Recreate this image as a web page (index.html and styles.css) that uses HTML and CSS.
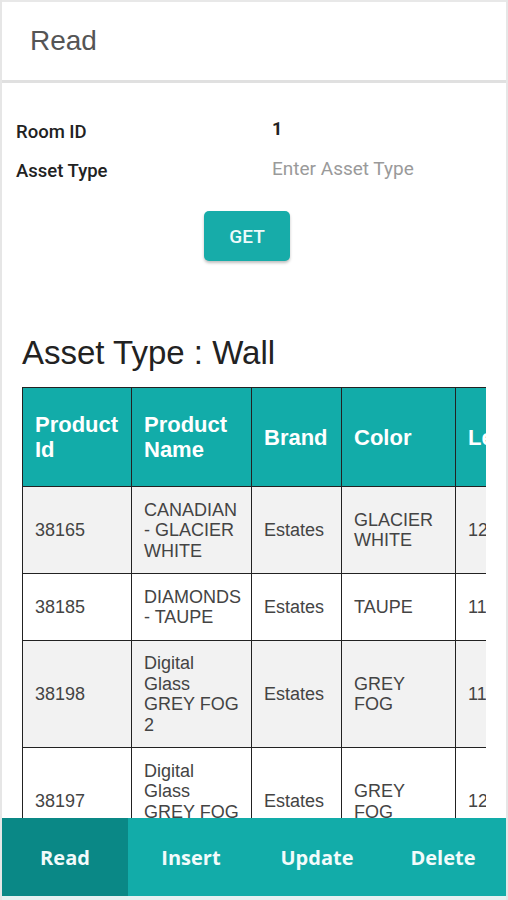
FILE: index.html
```html
<!DOCTYPE html>
<html lang="en">
<head>
<meta charset="utf-8">
<title>Read</title>
<link rel="stylesheet" href="styles.css">
</head>
<body>
<div class="app">
  <header class="topbar">Read</header>
  <main class="content">
    <div class="form">
      <div class="form-row">
        <span class="label">Room ID</span>
        <span class="value">1</span>
      </div>
      <div class="form-row">
        <span class="label">Asset Type</span>
        <span class="placeholder">Enter Asset Type</span>
      </div>
    </div>
    <div class="actions">
      <button class="get-btn">GET</button>
    </div>
    <h2 class="title">Asset Type : Wall</h2>
    <div class="table-wrap">
      <table class="grid">
        <colgroup>
          <col class="c1"><col class="c2"><col class="c3"><col class="c4"><col class="c5">
        </colgroup>
        <thead>
          <tr><th>Product Id</th><th>Product Name</th><th>Brand</th><th>Color</th><th>Length</th></tr>
        </thead>
        <tbody>
          <tr class="odd"><td>38165</td><td>CANADIAN - GLACIER WHITE</td><td>Estates</td><td>GLACIER WHITE</td><td>12</td></tr>
          <tr><td>38185</td><td>DIAMONDS - TAUPE</td><td>Estates</td><td>TAUPE</td><td>11</td></tr>
          <tr class="odd"><td>38198</td><td>Digital Glass GREY FOG 2</td><td>Estates</td><td>GREY FOG</td><td>11</td></tr>
          <tr><td>38197</td><td>Digital Glass GREY FOG 1</td><td>Estates</td><td>GREY FOG</td><td>12</td></tr>
        </tbody>
      </table>
    </div>
  </main>
  <nav class="tabs">
    <a class="tab active">Read</a>
    <a class="tab">Insert</a>
    <a class="tab">Update</a>
    <a class="tab">Delete</a>
  </nav>
  <div class="bottom-band"></div>
</div>
</body>
</html>
```

FILE: styles.css
```css
* { box-sizing: border-box; }
html, body { margin: 0; padding: 0; background: #fff; }
body { font-family: "Liberation Sans", Arial, sans-serif; }

.app {
  height: 900px;
  display: flex;
  flex-direction: column;
  border-left: 2px solid #e6e6e6;
  border-right: 2px solid #e6e6e6;
  overflow: hidden;
}

.topbar {
  height: 83px;
  flex: none;
  border-top: 2px solid #e8e8e8;
  border-bottom: 3px solid #e0e0e0;
  padding-left: 28px;
  display: flex;
  align-items: center;
  font-size: 28px;
  color: #555;
}

.content {
  flex: 1;
  min-height: 0;
  overflow: hidden;
  padding-top: 29px;
}

.form { padding-left: 14px; font-family: Roboto, "Liberation Sans", sans-serif; }
.form-row {
  display: grid;
  grid-template-columns: 256px 1fr;
  height: 39px;
  align-items: center;
}
.label { font-size: 18.5px; font-weight: 500; color: #222; }
.value { font-size: 18px; font-weight: 700; color: #222; margin-top: -7px; }
.placeholder { font-size: 19px; color: #9a9a9a; margin-top: -5px; }

.actions {
  display: flex;
  padding-left: 202px;
  margin-top: 21px;
}
.get-btn {
  width: 86px;
  height: 50px;
  border: none;
  border-radius: 5px;
  background: #17aca9;
  color: #eefafa;
  font-family: Roboto, "Liberation Sans", sans-serif;
  font-size: 19px;
  font-weight: 500;
  box-shadow: 0 2px 3px rgba(0,0,0,0.25);
}

.title {
  margin: 72px 0 0 20px;
  font-size: 33px;
  line-height: 40px;
  font-weight: 400;
  color: #222;
}

.table-wrap {
  margin: 14px 0 0 20px;
  width: 464px;
  overflow: hidden;
}
.grid {
  border-collapse: collapse;
  table-layout: fixed;
  width: 543px;
}
.c1 { width: 109px; }
.c2 { width: 120px; }
.c3 { width: 90px; }
.c4 { width: 114px; }
.c5 { width: 110px; }

.grid th, .grid td {
  border: 1px solid #222;
  text-align: left;
  vertical-align: middle;
}
.grid th {
  background: #12aca9;
  color: #fff;
  font-size: 22px;
  line-height: 25px;
  font-weight: 700;
  padding: 24px 12px;
}
.grid td {
  font-size: 18px;
  line-height: 20.5px;
  color: #444;
  padding: 12.5px 12px 12px;
}
.grid tr.odd td { background: #f2f2f2; }

.tabs {
  flex: none;
  height: 78px;
  display: grid;
  grid-template-columns: repeat(4, 1fr);
  background: #12aca9;
}
.tab {
  display: flex;
  align-items: center;
  justify-content: center;
  color: #f2fbfb;
  font-family: "Open Sans", Roboto, sans-serif;
  font-size: 20px;
  font-weight: 700;
}
.tab.active { background: #0a8886; }

.bottom-band {
  flex: none;
  height: 4px;
  background: #e4f2f2;
}
```
